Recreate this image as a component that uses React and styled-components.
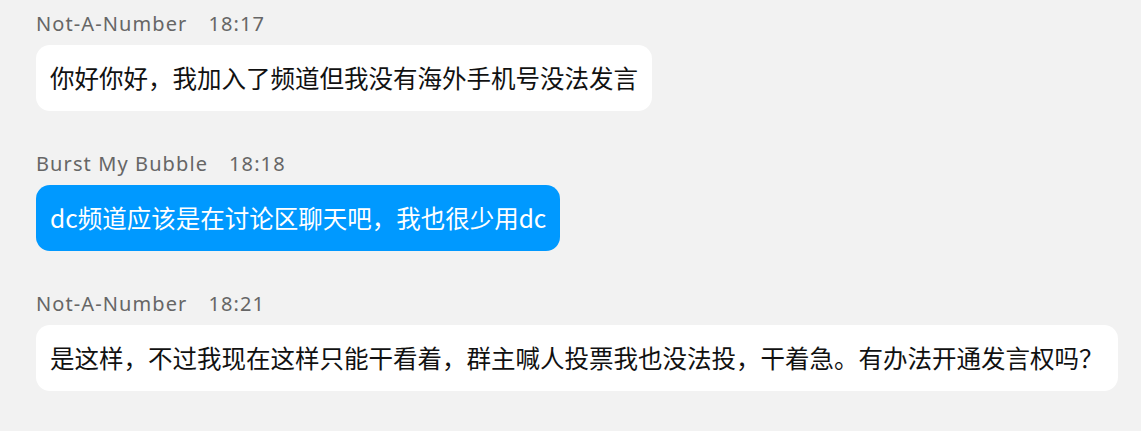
import styled, { createGlobalStyle } from 'styled-components';

const GlobalStyle = createGlobalStyle`
  html, body {
    margin: 0;
    padding: 0;
    background: #f2f2f2;
  }
`;

const ChatList = styled.div`
  display: flex;
  flex-direction: column;
  gap: 38px;
  padding: 9px 25px 0 36px;
  font-family: "Noto Sans", "Noto Sans CJK SC", sans-serif;
`;

const Message = styled.div`
  display: flex;
  flex-direction: column;
  align-items: flex-start;
  gap: 6px;
`;

const Header = styled.div`
  display: flex;
  gap: 21px;
  font-size: 20px;
  letter-spacing: 1.1px;
  line-height: 30px;
  color: #666;
`;

const Bubble = styled.div`
  padding: 14px 14px;
  border-radius: 14px;
  white-space: nowrap;
  font-family: "Noto Sans CJK SC", sans-serif;
  font-size: 24.5px;
  line-height: 38px;
  background: ${props => (props.mine ? '#0099ff' : '#ffffff')};
  color: ${props => (props.mine ? '#ffffff' : '#111111')};
`;

const messages = [
  { name: 'Not-A-Number', time: '18:17', text: '你好你好，我加入了频道但我没有海外手机号没法发言' },
  { name: 'Burst My Bubble', time: '18:18', text: 'dc频道应该是在讨论区聊天吧，我也很少用dc', mine: true },
  {
    name: 'Not-A-Number',
    time: '18:21',
    text: '是这样，不过我现在这样只能干看着，群主喊人投票我也没法投，干着急。有办法开通发言权吗？',
  },
];

const App = () => (
  <>
    <GlobalStyle />
    <ChatList>
      {messages.map(m => (
        <Message key={m.time}>
          <Header>
            <span>{m.name}</span>
            <span>{m.time}</span>
          </Header>
          <Bubble mine={m.mine}>{m.text}</Bubble>
        </Message>
      ))}
    </ChatList>
  </>
);

export default App;
